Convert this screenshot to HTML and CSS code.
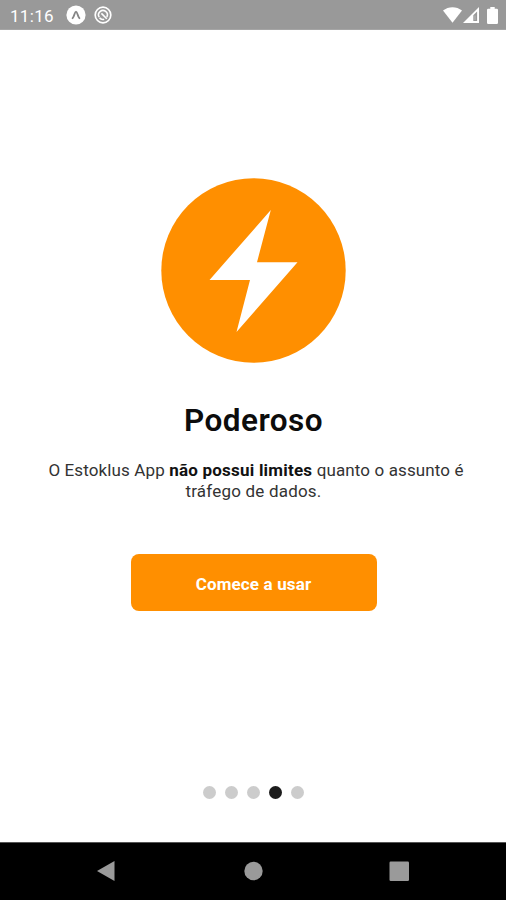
FILE: index.html
```html
<!DOCTYPE html>
<html lang="pt-BR">
<head>
    <meta charset="UTF-8">
    <meta name="viewport" content="width=device-width, initial-scale=1.0">
    <title>Estoklus App</title>
    <link rel="stylesheet" href="styles.css">
</head>
<body>
    <header class="status-bar">
        <span class="time">11:16</span>
        <svg class="status-app" viewBox="0 0 20 20">
            <circle cx="10" cy="10" r="9.6" fill="#fff"/>
            <path d="M6.6 13.2c1.6-1.6 2-6.4 3.4-6.4s1.8 4.8 3.4 6.4" fill="none" stroke="#858585" stroke-width="1.9" stroke-linecap="round"/>
        </svg>
        <svg class="status-sync" viewBox="0 0 18 18">
            <circle cx="9" cy="9" r="7.8" fill="none" stroke="#fff" stroke-width="1.7"/>
            <path d="M5.2 11.2A4.4 4.4 0 1 1 12.8 11M5.5 11.8a4.4 4.4 0 0 0 4.7 1.4M7.4 7.4l5.4 5.4" fill="none" stroke="#fff" stroke-width="1.6"/>
        </svg>
        <div class="status-right">
            <svg class="wifi" viewBox="0 0 19 16">
                <path d="M0 3.6C5.5-1 13.5-1 19 3.6L9.5 15.7z" fill="#fff"/>
            </svg>
            <svg class="signal" viewBox="0 0 16 16">
                <path d="M0 16L16 0v16zM10.3 8.2V14h3.8V4.4z" fill="#fff" fill-rule="evenodd"/>
                <path d="M11.5 8.5h1v4.5h-1z" fill="#fff" opacity=".35"/>
            </svg>
            <svg class="battery" viewBox="0 0 11 17">
                <path d="M3.3 0h4.4v1.8h2.1q1.2 0 1.2 1.2v12.8q0 1.2-1.2 1.2H1.2Q0 17 0 15.8V3q0-1.2 1.2-1.2h2.1z" fill="#fff"/>
            </svg>
        </div>
    </header>

    <main class="slide">
        <svg class="bolt" viewBox="0 0 185 185">
            <circle cx="92.5" cy="92.5" r="92.2" fill="#ff8f00"/>
            <path d="M109.8 32L96 84.2h40.5L75.5 154 89 102H48.5z" fill="#fff"/>
        </svg>
        <h1 class="title">Poderoso</h1>
        <p class="text">O Estoklus App <b>não possui limites</b> quanto o assunto é<br><span class="last-line">tráfego de dados.</span></p>
        <button class="btn">Comece a usar</button>
        <div class="dots">
            <span class="dot"></span>
            <span class="dot"></span>
            <span class="dot"></span>
            <span class="dot active"></span>
            <span class="dot"></span>
        </div>
    </main>

    <nav class="nav-bar">
        <svg class="nav-icon" viewBox="0 0 22 22">
            <path d="M1 11L18.5 1v20z" fill="#9a9a9a"/>
        </svg>
        <svg class="nav-icon" viewBox="0 0 22 22">
            <circle cx="11.5" cy="11" r="9.2" fill="#9a9a9a"/>
        </svg>
        <svg class="nav-icon" viewBox="0 0 22 22">
            <rect x="1.5" y="1.5" width="19.5" height="19.5" rx="1.2" fill="#9a9a9a"/>
        </svg>
    </nav>
</body>
</html>
```

FILE: styles.css
```css
* {
    box-sizing: border-box;
}

body {
    display: flex;
    flex-direction: column;
    height: 100vh;
    margin: 0;
    overflow: hidden;
    background-color: #fff;
    font-family: Roboto, sans-serif;
}

svg {
    display: block;
    flex-shrink: 0;
}

.status-bar {
    display: flex;
    align-items: center;
    height: 30px;
    padding: 0 8px 0 10px;
    background-color: #999;
    border-bottom: 1px solid #a5a5a5;
    color: #fff;
}

.time {
    width: 56px;
    font-size: 17px;
    letter-spacing: 0.3px;
    line-height: 30px;
    padding-top: 2px;
}

.status-app {
    width: 20px;
    height: 20px;
    margin-top: 1px;
}

.status-sync {
    width: 18px;
    height: 18px;
    margin: 1px 0 0 8px;
}

.status-right {
    display: flex;
    align-items: center;
    margin: 1px 0 0 auto;
}

.wifi {
    width: 19px;
    height: 16px;
}

.signal {
    width: 16px;
    height: 16px;
    margin-left: 1px;
}

.battery {
    width: 11px;
    height: 17px;
    margin-left: 8px;
}

.slide {
    flex: 1;
    display: flex;
    flex-direction: column;
    align-items: center;
    padding-top: 148px;
}

.bolt {
    width: 185px;
    height: 185px;
    margin-left: 1px;
}

.title {
    margin: 39px 0 0 1px;
    font-size: 31.5px;
    font-weight: 600;
    line-height: 38px;
    letter-spacing: 0.45px;
    color: #0c0c0c;
}

.text {
    margin: 20px 0 0 6px;
    font-size: 17px;
    line-height: 20.5px;
    letter-spacing: 0.12px;
    text-align: center;
    white-space: nowrap;
    color: #333;
}

.text b {
    letter-spacing: 0.22px;
    color: #111;
}

.last-line {
    padding-right: 5px;
    letter-spacing: 0.2px;
}

.btn {
    width: 246px;
    height: 57px;
    margin: 53px 0 0 1px;
    padding: 2px 0 0;
    border: none;
    border-radius: 8px;
    background-color: #ff8f00;
    color: #fff;
    font-family: inherit;
    font-size: 17px;
    font-weight: bold;
    letter-spacing: 0.15px;
    cursor: pointer;
}

.dots {
    display: flex;
    gap: 9px;
    margin: auto 0 43px 1px;
}

.dot {
    width: 13px;
    height: 13px;
    border-radius: 50%;
    background-color: #ccc;
}

.dot.active {
    background-color: #1c1c1c;
}

.nav-bar {
    display: flex;
    align-items: center;
    justify-content: space-between;
    height: 58px;
    padding: 0 96px 1px;
    background-color: #000;
    border-top: 1px solid #555;
}

.nav-icon {
    width: 22px;
    height: 22px;
}
```
